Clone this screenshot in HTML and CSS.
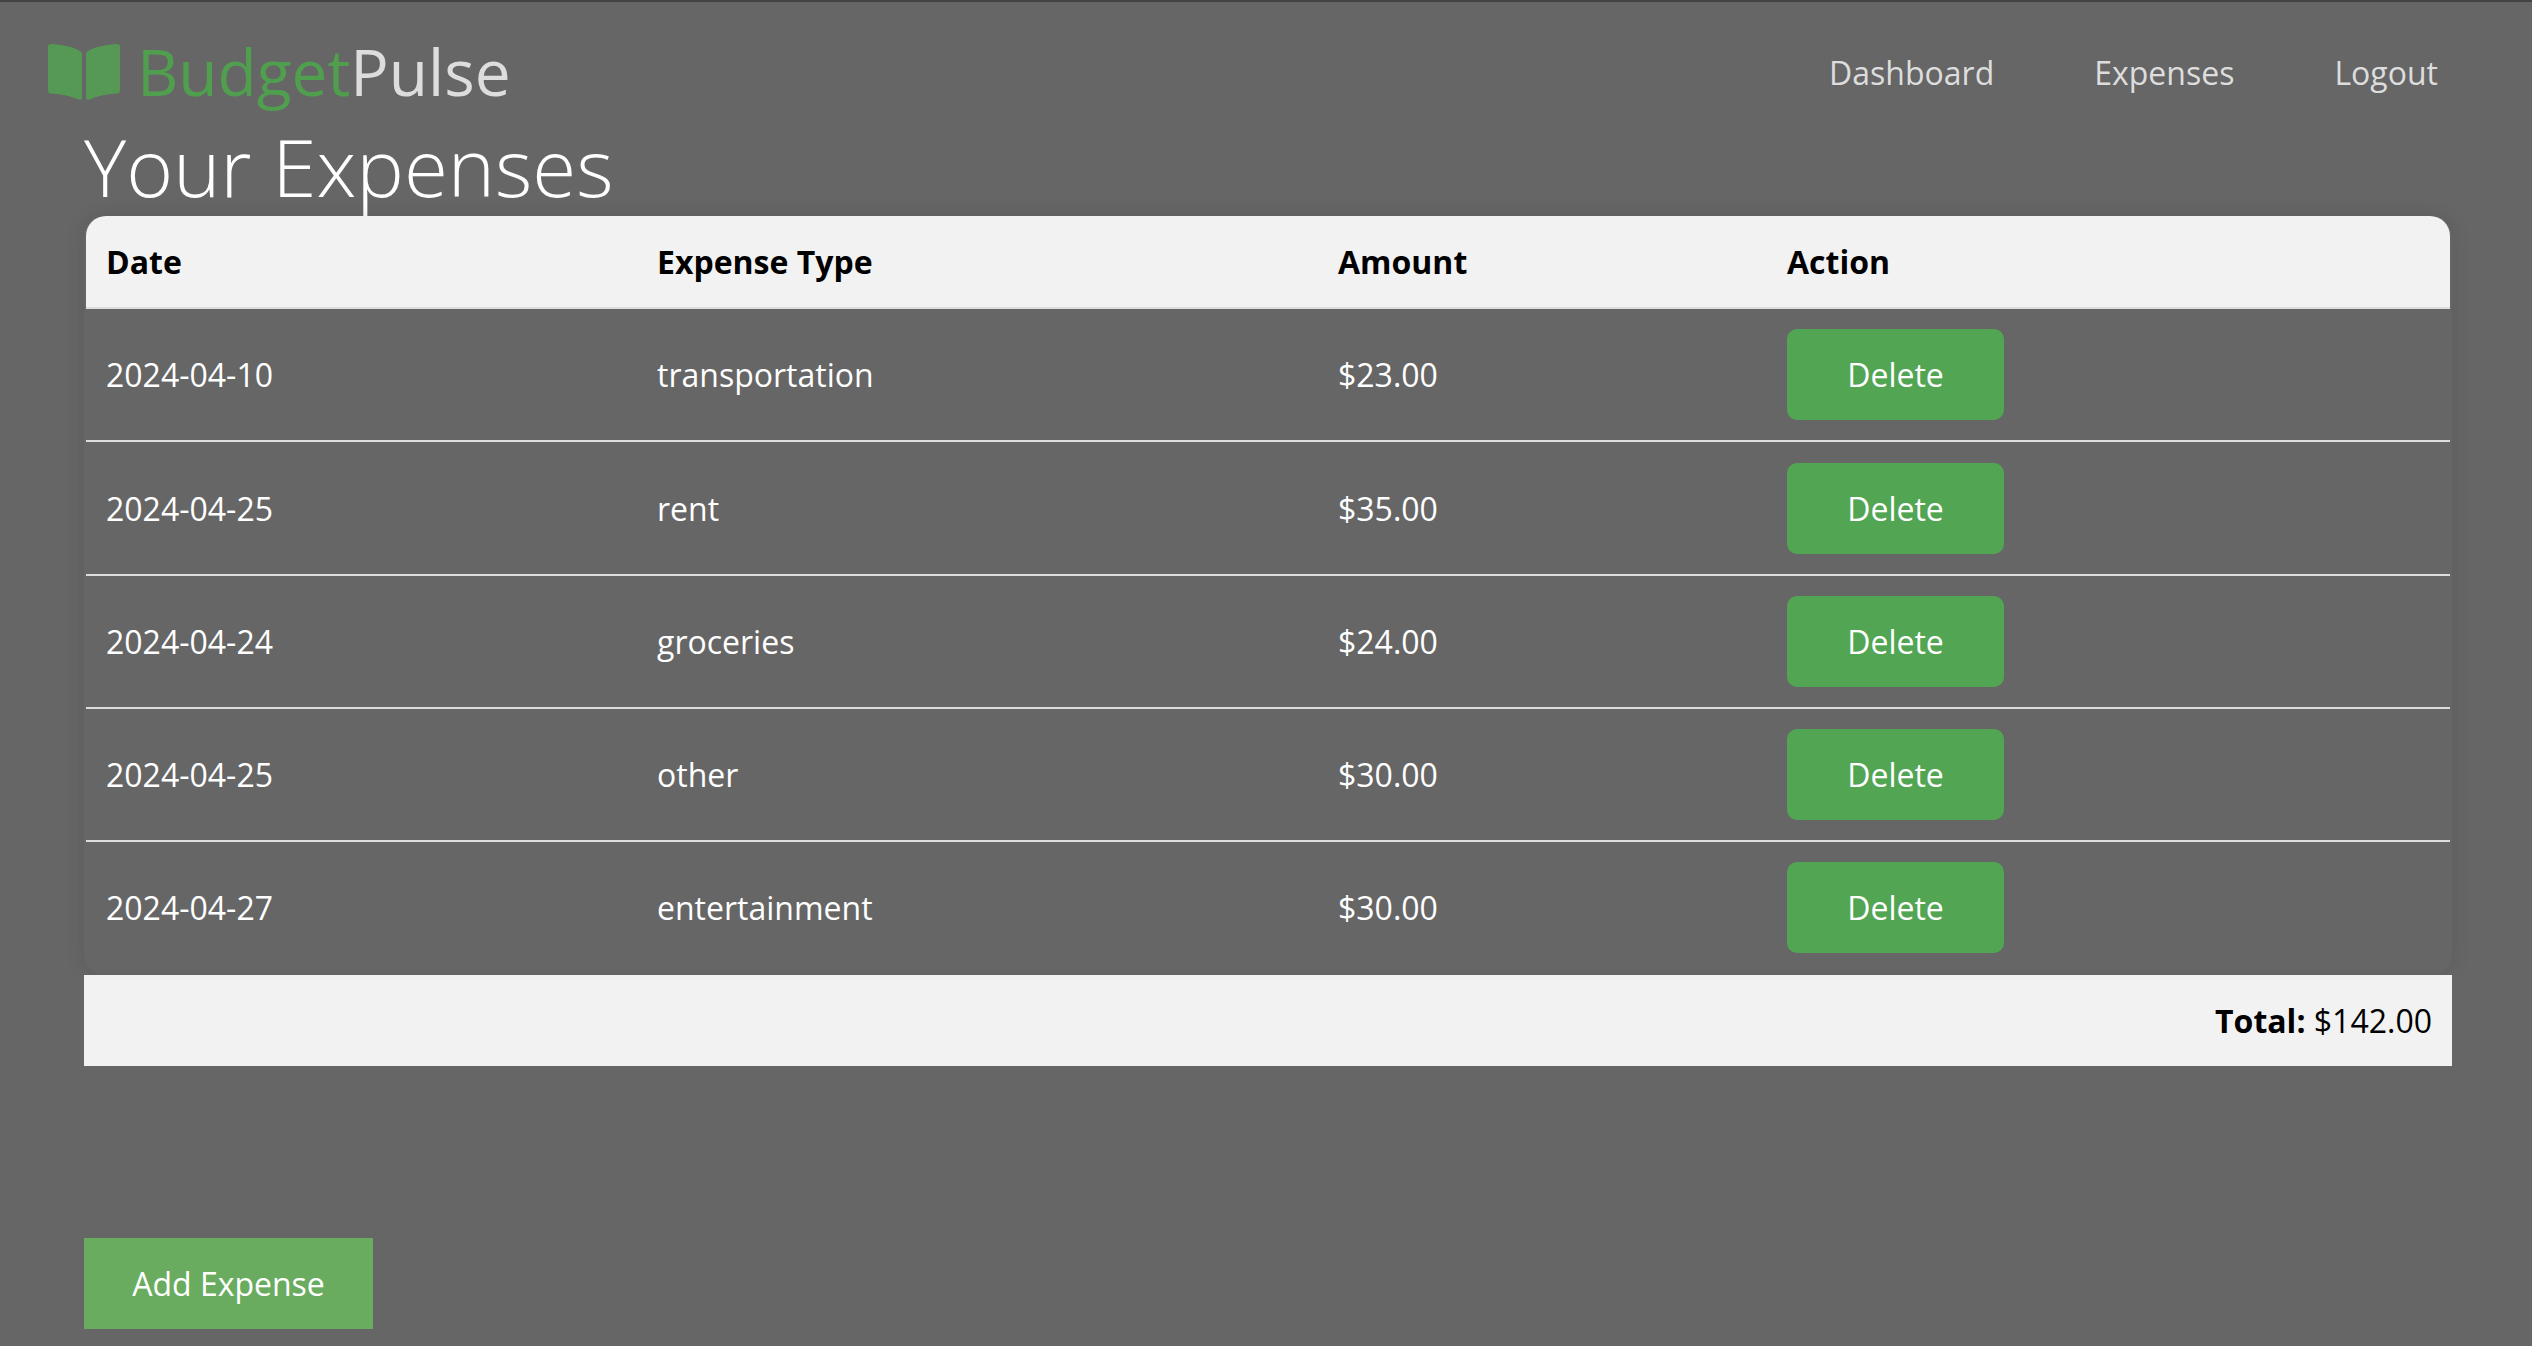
FILE: index.html
```html
<!DOCTYPE html>
<html lang="en">
<head>
<meta charset="UTF-8">
<meta name="viewport" content="width=device-width, initial-scale=1.0">
<title>BudgetPulse - Your Expenses</title>
<link rel="stylesheet" href="styles.css">
</head>
<body>
<header class="site-header">
  <a class="logo" href="#">
    <svg class="logo-icon" viewBox="0 0 72 56" aria-hidden="true">
      <path d="M3 0C13 .5 24 2.500 31 6.500C33 7.500 34 8.500 34 10V53.500C34 55.500 32.500 56.300 30.500 55.500C23 52 14 50 3 49.500C1 49.300 0 48 0 46V3C0 1 1 0 3 0Z"/>
      <path d="M69 0C59 .5 48 2.500 41 6.500C39 7.500 38 8.500 38 10V53.500C38 55.500 39.500 56.300 41.500 55.500C49 52 58 50 69 49.500C71 49.300 72 48 72 46V3C72 1 71 0 69 0Z"/>
    </svg>
    <span class="logo-text"><span class="logo-green">Budget</span>Pulse</span>
  </a>
  <nav class="nav">
    <a href="#">Dashboard</a>
    <a href="#">Expenses</a>
    <a href="#">Logout</a>
  </nav>
</header>

<main class="content">
  <h1>Your Expenses</h1>
  <div class="table-wrap">
    <table class="expenses">
      <colgroup>
        <col class="col-date">
        <col class="col-type">
        <col class="col-amount">
        <col class="col-action">
      </colgroup>
      <thead>
        <tr>
          <th>Date</th>
          <th>Expense Type</th>
          <th>Amount</th>
          <th>Action</th>
        </tr>
      </thead>
      <tbody>
        <tr>
          <td>2024-04-10</td>
          <td>transportation</td>
          <td>$23.00</td>
          <td><button class="delete-btn" type="button">Delete</button></td>
        </tr>
        <tr>
          <td>2024-04-25</td>
          <td>rent</td>
          <td>$35.00</td>
          <td><button class="delete-btn" type="button">Delete</button></td>
        </tr>
        <tr>
          <td>2024-04-24</td>
          <td>groceries</td>
          <td>$24.00</td>
          <td><button class="delete-btn" type="button">Delete</button></td>
        </tr>
        <tr>
          <td>2024-04-25</td>
          <td>other</td>
          <td>$30.00</td>
          <td><button class="delete-btn" type="button">Delete</button></td>
        </tr>
        <tr>
          <td>2024-04-27</td>
          <td>entertainment</td>
          <td>$30.00</td>
          <td><button class="delete-btn" type="button">Delete</button></td>
        </tr>
      </tbody>
    </table>
  </div>
  <div class="total"><strong>Total:</strong> $142.00</div>
  <button class="add-btn" type="button">Add Expense</button>
</main>
</body>
</html>
```

FILE: styles.css
```css
* {
    box-sizing: border-box;
}

body {
    font-family: "Open Sans", sans-serif;
    font-size: 32px;
    margin: 0;
    padding: 0;
    background-color: #666;
    color: #fff;
    border-top: 2px solid #444;
}

a {
    text-decoration: none;
    color: inherit;
}

/* Header */
.site-header {
    display: flex;
    justify-content: space-between;
    align-items: center;
    height: 120px;
    padding: 20px 94px 0 48px;
}

.logo {
    display: flex;
    align-items: center;
    gap: 17px;
    color: #ddd;
}

.logo-icon {
    width: 72px;
    height: 56px;
    fill: #559955;
}

.logo-text {
    font-size: 64px;
    font-weight: 400;
    line-height: 88px;
}

.logo-green {
    color: #4f9f4f;
}

.nav {
    display: flex;
    gap: 100px;
    color: #ddd;
}

/* Page content */
.content {
    padding: 0 80px 0 84px;
}

h1 {
    margin: -3px 0 3px;
    font-size: 80px;
    font-weight: 300;
    line-height: 94px;
}

/* positioned so the heading's descender stays behind the table */
.table-wrap {
    position: relative;
    padding: 0 2px;
    background-color: #666;
    border-radius: 20px;
    box-shadow: 0 0 20px rgba(0, 0, 0, 0.1);
}

.expenses {
    width: 100%;
    table-layout: fixed;
    border-collapse: separate;
    border-spacing: 0;
}

.col-date {
    width: 551px;
}

.col-type {
    width: 681px;
}

.col-amount {
    width: 449px;
}

.expenses th {
    padding: 24px 20px;
    background-color: #f2f2f2;
    border-bottom: 2px solid #ddd;
    color: #000;
    font-weight: 700;
    line-height: 43px;
    text-align: left;
}

.expenses th:first-child {
    border-top-left-radius: 20px;
}

.expenses th:last-child {
    border-top-right-radius: 20px;
}

.expenses td {
    padding: 20px;
    border-bottom: 2px solid #ddd;
}

.expenses tbody tr:nth-child(2) td {
    padding-top: 21px;
}

.expenses tbody tr:last-child td {
    border-bottom-color: transparent;
}

.delete-btn,
.add-btn {
    padding: 24px 0;
    border: none;
    color: #fff;
    font-family: inherit;
    font-size: 32px;
    line-height: 43px;
    cursor: pointer;
}

.delete-btn {
    display: block;
    width: 217px;
    background-color: #52a552;
    border-radius: 10px;
}

.total {
    position: relative;
    padding: 24px 20px;
    background-color: #f2f2f2;
    color: #000;
    line-height: 43px;
    text-align: right;
}

.add-btn {
    display: block;
    width: 289px;
    margin-top: 172px;
    background-color: #69ac5f;
}
```
